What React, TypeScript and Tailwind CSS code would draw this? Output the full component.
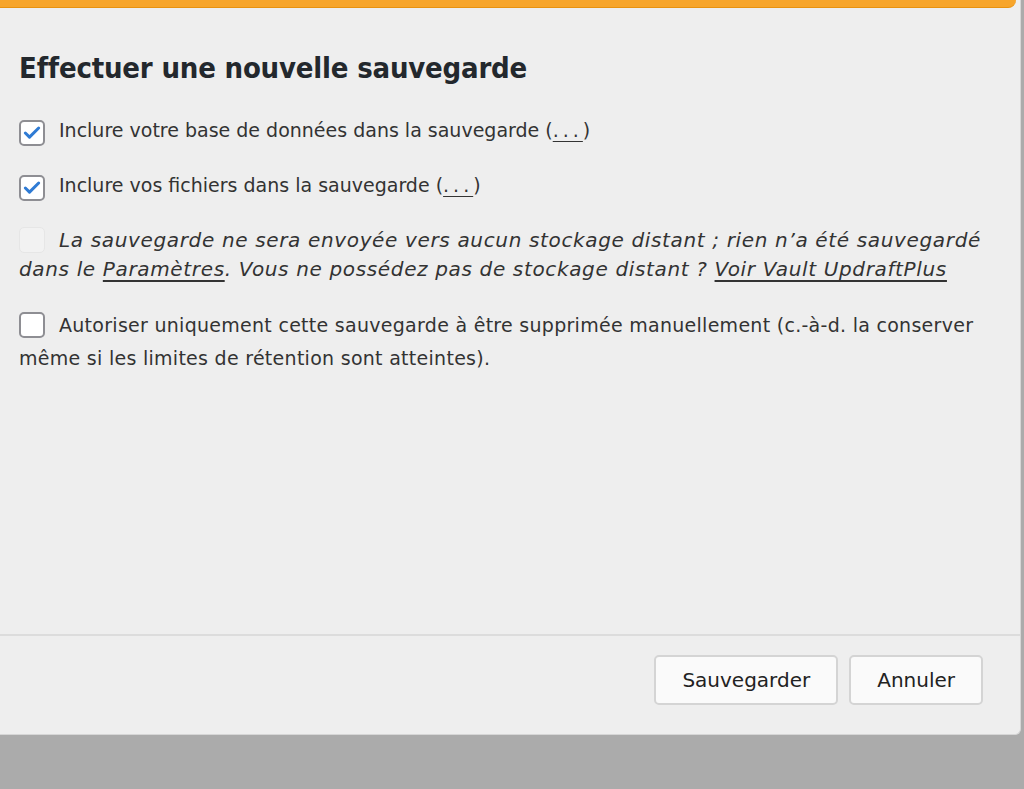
import { Check } from "lucide-react";

const font = { fontFamily: '"DejaVu Sans", Verdana, sans-serif' };

function Box({ checked, disabled }: { checked?: boolean; disabled?: boolean }) {
  if (disabled) {
    return <span className="mr-[14px] inline-block size-[26px] shrink-0 rounded-[5px] border border-[#e6e6e6] bg-[#f2f2f2] align-[-6px]" />;
  }
  return (
    <span className="mr-[14px] inline-grid size-[26px] shrink-0 place-items-center rounded-[5px] border-2 border-[#8e8e93] bg-white align-[-6px]">
      {checked && <Check size={20} strokeWidth={3.6} className="text-[#2f7bd4]" />}
    </span>
  );
}

export default function App() {
  return (
    <div className="h-[789px] w-[1024px] overflow-hidden bg-[#ababab] text-[#333]" style={font}>
      <div className="flex h-[735px] w-[1021px] flex-col rounded-br-[6px] border-r border-b border-[#d6d6d6] bg-[#eeeeee]">
        <div className="h-[8px] w-[1016px] rounded-br-[8px] border-b border-[#e8920f] bg-[#f7a52b]" />

        <div className="flex-1 pl-[19px] pr-[8px]">
          <h2
            className="mt-[42px] text-[29px] leading-[36px] font-bold tracking-[-0.2px] text-[#23282d]"
            style={{ fontFamily: '"DejaVu Sans Condensed", "DejaVu Sans", sans-serif' }}
          >
            Effectuer une nouvelle sauvegarde
          </h2>

          <p className="mt-[28px] text-[19px] leading-[33px]">
            <Box checked />
            Inclure votre base de données dans la sauvegarde (<span className="tracking-[4px] underline underline-offset-4">...</span>)
          </p>
          <p className="mt-[22px] text-[19px] leading-[33px]">
            <Box checked />
            Inclure vos fichiers dans la sauvegarde (<span className="tracking-[4px] underline underline-offset-4">...</span>)
          </p>
          <p className="mt-[24px] text-[20px] leading-[29px] tracking-[0.65px] italic">
            <Box disabled />
            La sauvegarde ne sera envoyée vers aucun stockage distant ; rien n’a été sauvegardé
            <br />
            dans le <span className="underline underline-offset-4">Paramètres</span>. Vous ne possédez pas de stockage distant ?{" "}
            <span className="underline underline-offset-4">Voir Vault UpdraftPlus</span>
          </p>
          <p className="mt-[25px] text-[19px] leading-[33px] tracking-[0.28px]">
            <Box />
            Autoriser uniquement cette sauvegarde à être supprimée manuellement (c.-à-d. la conserver
            <br />
            même si les limites de rétention sont atteintes).
          </p>
        </div>

        <div className="flex h-[100px] items-start justify-end gap-[11px] border-t-2 border-[#dcdcdc] pt-[19px] pr-[37px]">
          <button className="h-[50px] rounded-[5px] border-2 border-[#d4d4d4] bg-[#fafafa] px-[26px] text-[20px] text-[#222]">Sauvegarder</button>
          <button className="h-[50px] rounded-[5px] border-2 border-[#d4d4d4] bg-[#fafafa] px-[26px] text-[20px] text-[#222]">Annuler</button>
        </div>
      </div>
    </div>
  );
}
